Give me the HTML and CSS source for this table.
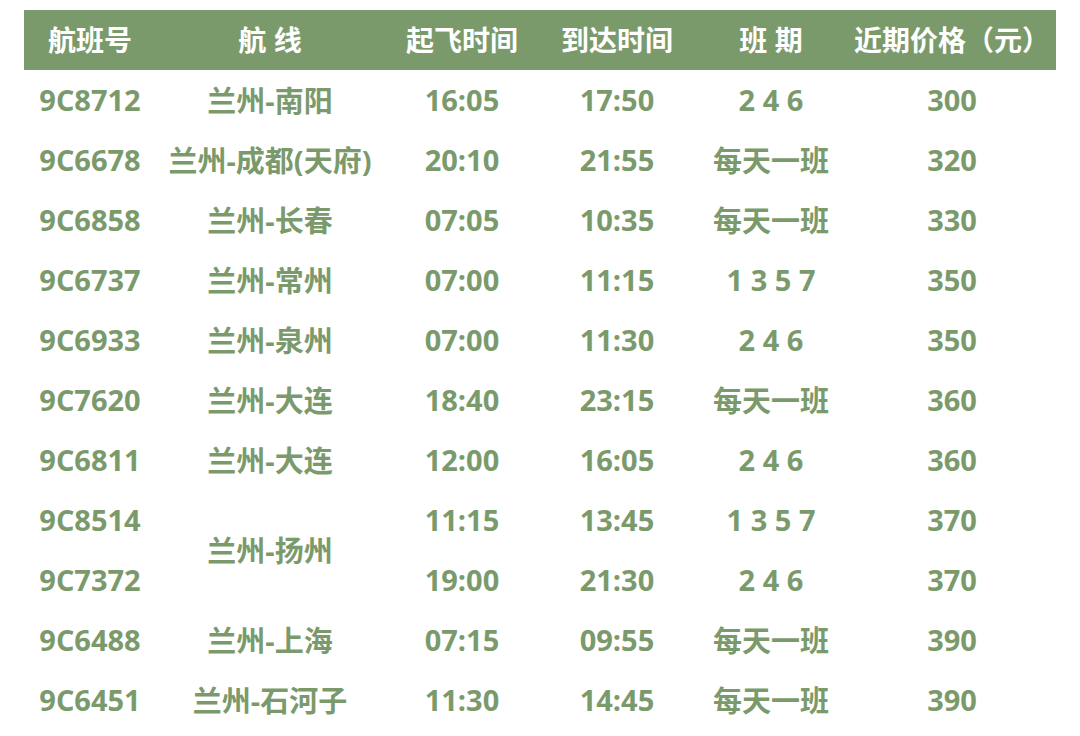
FILE: index.html
```html
<!DOCTYPE html>
<html lang="zh">
<head>
<meta charset="utf-8">
<link rel="stylesheet" href="styles.css">
</head>
<body>
<div class="wrap">
<table class="flights">
  <colgroup>
    <col class="c1"><col class="c2"><col class="c3"><col class="c4"><col class="c5"><col class="c6">
  </colgroup>
  <thead>
    <tr><th>航班号</th><th>航 线</th><th>起飞时间</th><th>到达时间</th><th>班 期</th><th>近期价格（元）</th></tr>
  </thead>
  <tbody>
    <tr><td>9C8712</td><td>兰州-南阳</td><td>16:05</td><td>17:50</td><td>2 4 6</td><td>300</td></tr>
    <tr><td>9C6678</td><td>兰州-成都(天府)</td><td>20:10</td><td>21:55</td><td>每天一班</td><td>320</td></tr>
    <tr><td>9C6858</td><td>兰州-长春</td><td>07:05</td><td>10:35</td><td>每天一班</td><td>330</td></tr>
    <tr><td>9C6737</td><td>兰州-常州</td><td>07:00</td><td>11:15</td><td>1 3 5 7</td><td>350</td></tr>
    <tr><td>9C6933</td><td>兰州-泉州</td><td>07:00</td><td>11:30</td><td>2 4 6</td><td>350</td></tr>
    <tr><td>9C7620</td><td>兰州-大连</td><td>18:40</td><td>23:15</td><td>每天一班</td><td>360</td></tr>
    <tr><td>9C6811</td><td>兰州-大连</td><td>12:00</td><td>16:05</td><td>2 4 6</td><td>360</td></tr>
    <tr><td>9C8514</td><td rowspan="2">兰州-扬州</td><td>11:15</td><td>13:45</td><td>1 3 5 7</td><td>370</td></tr>
    <tr><td>9C7372</td><td>19:00</td><td>21:30</td><td>2 4 6</td><td>370</td></tr>
    <tr><td>9C6488</td><td>兰州-上海</td><td>07:15</td><td>09:55</td><td>每天一班</td><td>390</td></tr>
    <tr><td>9C6451</td><td>兰州-石河子</td><td>11:30</td><td>14:45</td><td>每天一班</td><td>390</td></tr>
  </tbody>
</table>
</div>
</body>
</html>
```

FILE: styles.css
```css
html, body {
  margin: 0;
  padding: 0;
  background: #ffffff;
}
.wrap {
  padding: 10px 24px 0 24px;
}
.flights {
  width: 1032px;
  border-collapse: collapse;
  table-layout: fixed;
  font-family: "Open Sans", "Noto Sans CJK SC", sans-serif;
  font-weight: 700;
  font-size: 29px;
  color: #7b9a6c;
}
.c1 { width: 132px; }
.c2 { width: 228px; }
.c3 { width: 156px; }
.c4 { width: 154px; }
.c5 { width: 154px; }
.c6 { width: 208px; }
.flights th {
  background: #7b9a6c;
  color: #ffffff;
  height: 58px;
  padding: 0 0 2px 0;
  text-align: center;
  font-weight: 700;
  font-size: 28px;
  white-space: pre;
}
.flights td {
  height: 58px;
  padding: 0 0 2px 0;
  text-align: center;
  vertical-align: middle;
  white-space: pre;
}
```
